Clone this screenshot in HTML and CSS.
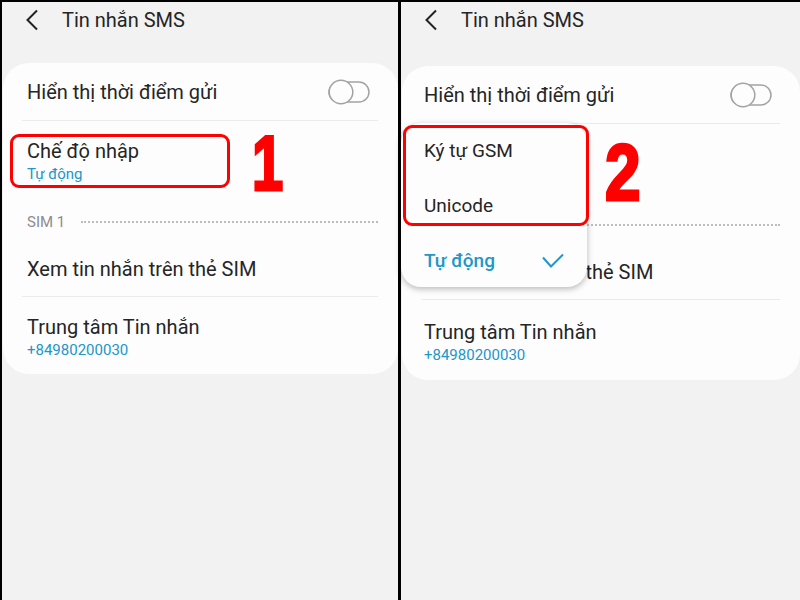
FILE: index.html
```html
<!DOCTYPE html>
<html lang="vi">

<head>
    <meta charset="UTF-8">
    <meta name="viewport" content="width=device-width, initial-scale=1.0">
    <title>Tin nhắn SMS</title>
    <link rel="stylesheet" href="styles.css">
</head>

<body>
    <!-- Màn hình 1 -->
    <div class="panel panel-left">
        <div class="header">
            <svg class="back" width="14" height="22" viewBox="0 0 14 22">
                <polyline points="12,1.5 2.5,11 12,20.5" fill="none" stroke="#222" stroke-width="2" />
            </svg>
            <span class="title">Tin nhắn SMS</span>
        </div>

        <div class="card">
            <div class="row row-switch">
                <span class="label">Hiển thị thời điểm gửi</span>
                <svg class="toggle" width="42" height="26" viewBox="0 0 42 26">
                    <rect x="1" y="3" width="40" height="20" rx="10" fill="none" stroke="#a3a3a3" stroke-width="1.5" />
                    <circle cx="13" cy="13" r="11.8" fill="#fdfdfd" stroke="#a3a3a3" stroke-width="1.5" />
                </svg>
            </div>
            <div class="divider"></div>
            <div class="row row-two">
                <span class="label">Chế độ nhập</span>
                <span class="sub">Tự động</span>
            </div>
            <div class="section">
                <span class="section-name">SIM 1</span>
                <span class="dots"></span>
            </div>
            <div class="row row-one">
                <span class="label">Xem tin nhắn trên thẻ SIM</span>
            </div>
            <div class="divider"></div>
            <div class="row row-two row-last">
                <span class="label">Trung tâm Tin nhắn</span>
                <span class="sub">+84980200030</span>
            </div>
        </div>

        <!-- Chú thích -->
        <div class="mark mark-1"></div>
        <span class="step step-1">1</span>
    </div>

    <!-- Màn hình 2 -->
    <div class="panel panel-right">
        <div class="header">
            <svg class="back" width="14" height="22" viewBox="0 0 14 22">
                <polyline points="12,1.5 2.5,11 12,20.5" fill="none" stroke="#222" stroke-width="2" />
            </svg>
            <span class="title">Tin nhắn SMS</span>
        </div>

        <div class="card">
            <div class="row row-switch">
                <span class="label">Hiển thị thời điểm gửi</span>
                <svg class="toggle" width="42" height="26" viewBox="0 0 42 26">
                    <rect x="1" y="3" width="40" height="20" rx="10" fill="none" stroke="#a3a3a3" stroke-width="1.5" />
                    <circle cx="13" cy="13" r="11.8" fill="#fdfdfd" stroke="#a3a3a3" stroke-width="1.5" />
                </svg>
            </div>
            <div class="divider"></div>
            <!-- Hàng này bị menu che hoàn toàn -->
            <div class="row row-two covered">
                <span class="label">Chế độ nhập</span>
                <span class="sub">Tự động</span>
            </div>
            <div class="section">
                <span class="section-name covered">SIM 1</span>
                <span class="dots"></span>
            </div>
            <div class="row row-one">
                <span class="label">Xem tin nhắn trên thẻ SIM</span>
            </div>
            <div class="divider"></div>
            <div class="row row-two row-last">
                <span class="label">Trung tâm Tin nhắn</span>
                <span class="sub">+84980200030</span>
            </div>
        </div>

        <!-- Menu chọn chế độ nhập -->
        <div class="menu">
            <div class="menu-item">Ký tự GSM</div>
            <div class="menu-item">Unicode</div>
            <div class="menu-item menu-item-active">
                <span>Tự động</span>
                <svg width="22" height="16" viewBox="0 0 22 16">
                    <polyline points="1,4.5 9,13.5 21,1.5" fill="none" stroke="#2196c9" stroke-width="2" />
                </svg>
            </div>
        </div>

        <!-- Chú thích -->
        <div class="mark mark-2"></div>
        <span class="step step-2">2</span>
    </div>
</body>

</html>
```

FILE: styles.css
```css
/* Khung chung */
body {
    margin: 0;
    height: 600px;
    padding: 2px 0 0 2px;
    box-sizing: border-box;
    background-color: #000;
    display: flex;
    gap: 3px;
    font-family: Roboto, "Noto Sans", sans-serif;
    color: #252525;
    overflow: hidden;
}

.panel {
    position: relative;
    background-color: #f2f2f2;
    height: 598px;
}

.panel-left {
    width: 396px;
}

.panel-right {
    width: 399px;
}

/* Thanh tiêu đề */
.header {
    height: 61px;
    display: flex;
    align-items: flex-start;
    padding-top: 6px;
    box-sizing: border-box;
}

.back {
    margin-left: 23px;
    margin-top: 1px;
}

.title {
    margin-left: 23px;
    font-size: 20px;
    line-height: 24px;
}

/* Thẻ cài đặt */
.card {
    background-color: #fdfdfd;
    border-radius: 26px;
    margin: 0 0 0 1px;
}

.panel-right .card {
    margin-top: 3px;
}

.row {
    padding: 0 28px 0 24px;
}

.panel-right .row {
    padding-left: 22px;
}

.label {
    font-size: 20px;
    line-height: 26px;
}

.sub {
    display: block;
    font-size: 15px;
    line-height: 20px;
    color: #2196c9;
}

.row-switch {
    height: 57px;
    display: flex;
    align-items: center;
    justify-content: space-between;
}

.row-two {
    padding-top: 17px;
    padding-bottom: 16px;
}

.row-two .label {
    display: block;
}

.row-last {
    padding-bottom: 14px;
}

.panel-right .row-last {
    padding-top: 19px;
    padding-bottom: 15px;
}

.row-one {
    height: 54px;
    display: flex;
    align-items: center;
}

.covered {
    visibility: hidden;
}

.divider {
    height: 1px;
    background-color: #ebebeb;
    margin: 0 20px 0 19px;
}

/* Nhóm SIM 1 */
.section {
    display: flex;
    align-items: center;
    padding: 12px 20px 10px 24px;
}

.section-name {
    font-size: 15px;
    line-height: 20px;
    color: #8c8c8c;
}

.dots {
    flex: 1;
    margin-left: 16px;
    border-top: 2px dotted #bdbdbd;
}

/* Menu bật lên */
.menu {
    position: absolute;
    left: 0;
    top: 121px;
    width: 186px;
    height: 164px;
    background-color: #fdfdfd;
    border-radius: 20px;
    box-shadow: 0 2px 6px rgba(0, 0, 0, 0.28);
}

.menu-item {
    height: 55px;
    display: flex;
    align-items: center;
    justify-content: space-between;
    padding: 0 23px 0 23px;
    font-size: 19px;
}

.menu-item-active {
    color: #2196c9;
    font-weight: 500;
}

/* Khung đỏ và số thứ tự */
.mark {
    position: absolute;
    border: 3px solid #f00;
    border-radius: 9px;
}

.mark-1 {
    left: 8px;
    top: 132px;
    width: 214px;
    height: 48px;
}

.mark-2 {
    left: 2px;
    top: 123px;
    width: 180px;
    height: 95px;
}

.step {
    position: absolute;
    color: #f00;
    font-family: "Liberation Sans", Arial, sans-serif;
    font-weight: bold;
    -webkit-text-stroke: 3px #f00;
    line-height: 1;
    transform-origin: left top;
}

.step-1 {
    left: 250px;
    top: 122px;
    font-size: 78px;
    transform: scaleX(0.72);
}

.step-2 {
    left: 204px;
    top: 131px;
    font-size: 80px;
    transform: scaleX(0.8);
}
```
